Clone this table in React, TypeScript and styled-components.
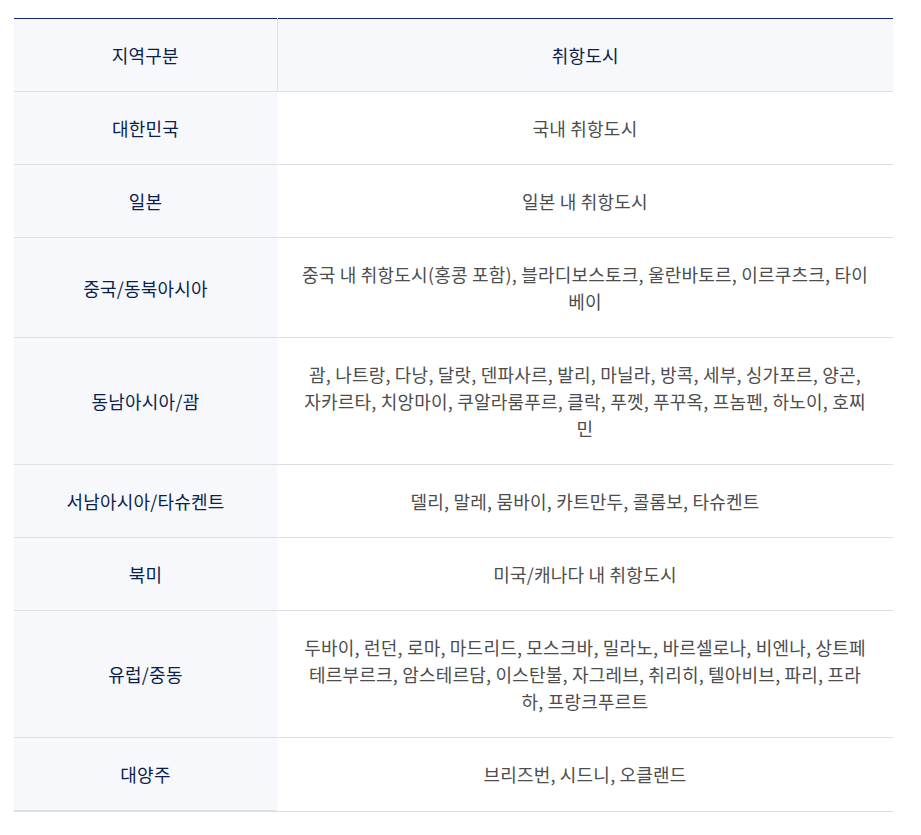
import React from "react";
import styled, { createGlobalStyle } from "styled-components";

const Global = createGlobalStyle`
  html, body { margin: 0; padding: 0; background: #fff; }
  body { font-family: "Noto Sans CJK KR", "Noto Sans", sans-serif; }
`;

const Page = styled.div`
  padding: 18px 28px 0 14px;
`;

const Table = styled.table`
  width: 879px;
  border-collapse: collapse;
  border-top: 1px solid #0a2a6b;
  table-layout: fixed;
  font-size: 18px;
  line-height: 27px;
  letter-spacing: 0.2px;
`;

const HeadCell = styled.th<{ $first?: boolean }>`
  background: #f7f8fc;
  color: #0b1f4d;
  font-weight: 400;
  height: 73px;
  padding: 0 20px;
  text-align: center;
  border-bottom: 1px solid #dddfe3;
  border-right: ${(p) => (p.$first ? "1px solid #dddfe3" : "none")};
  width: ${(p) => (p.$first ? "263px" : "auto")};
  box-sizing: border-box;
`;

const RegionCell = styled.th<{ $last?: boolean }>`
  background: #f7f8fc;
  color: #0b1f4d;
  font-weight: 400;
  padding: 23px 20px 22px;
  text-align: center;
  border-bottom: ${(p) => (p.$last ? "2px" : "1px")} solid #dddfe3;
`;

const CityCell = styled.td`
  color: #4d4d4d;
  padding: 23px 24px 22px;
  text-align: center;
  border-bottom: 1px solid #dddfe3;
  word-break: break-all;
`;

const rows: [string, string][] = [
  ["대한민국", "국내 취항도시"],
  ["일본", "일본 내 취항도시"],
  ["중국/동북아시아", "중국 내 취항도시(홍콩 포함), 블라디보스토크, 울란바토르, 이르쿠츠크, 타이베이"],
  ["동남아시아/괌", "괌, 나트랑, 다낭, 달랏, 덴파사르, 발리, 마닐라, 방콕, 세부, 싱가포르, 양곤, 자카르타, 치앙마이, 쿠알라룸푸르, 클락, 푸껫, 푸꾸옥, 프놈펜, 하노이, 호찌민"],
  ["서남아시아/타슈켄트", "델리, 말레, 뭄바이, 카트만두, 콜롬보, 타슈켄트"],
  ["북미", "미국/캐나다 내 취항도시"],
  ["유럽/중동", "두바이, 런던, 로마, 마드리드, 모스크바, 밀라노, 바르셀로나, 비엔나, 상트페테르부르크, 암스테르담, 이스탄불, 자그레브, 취리히, 텔아비브, 파리, 프라하, 프랑크푸르트"],
  ["대양주", "브리즈번, 시드니, 오클랜드"],
];

export default function App() {
  return (
    <>
      <Global />
      <Page>
        <Table>
          <thead>
            <tr>
              <HeadCell $first>지역구분</HeadCell>
              <HeadCell>취항도시</HeadCell>
            </tr>
          </thead>
          <tbody>
            {rows.map(([region, cities], i) => (
              <tr key={region}>
                <RegionCell $last={i === rows.length - 1}>{region}</RegionCell>
                <CityCell>{cities}</CityCell>
              </tr>
            ))}
          </tbody>
        </Table>
      </Page>
    </>
  );
}
